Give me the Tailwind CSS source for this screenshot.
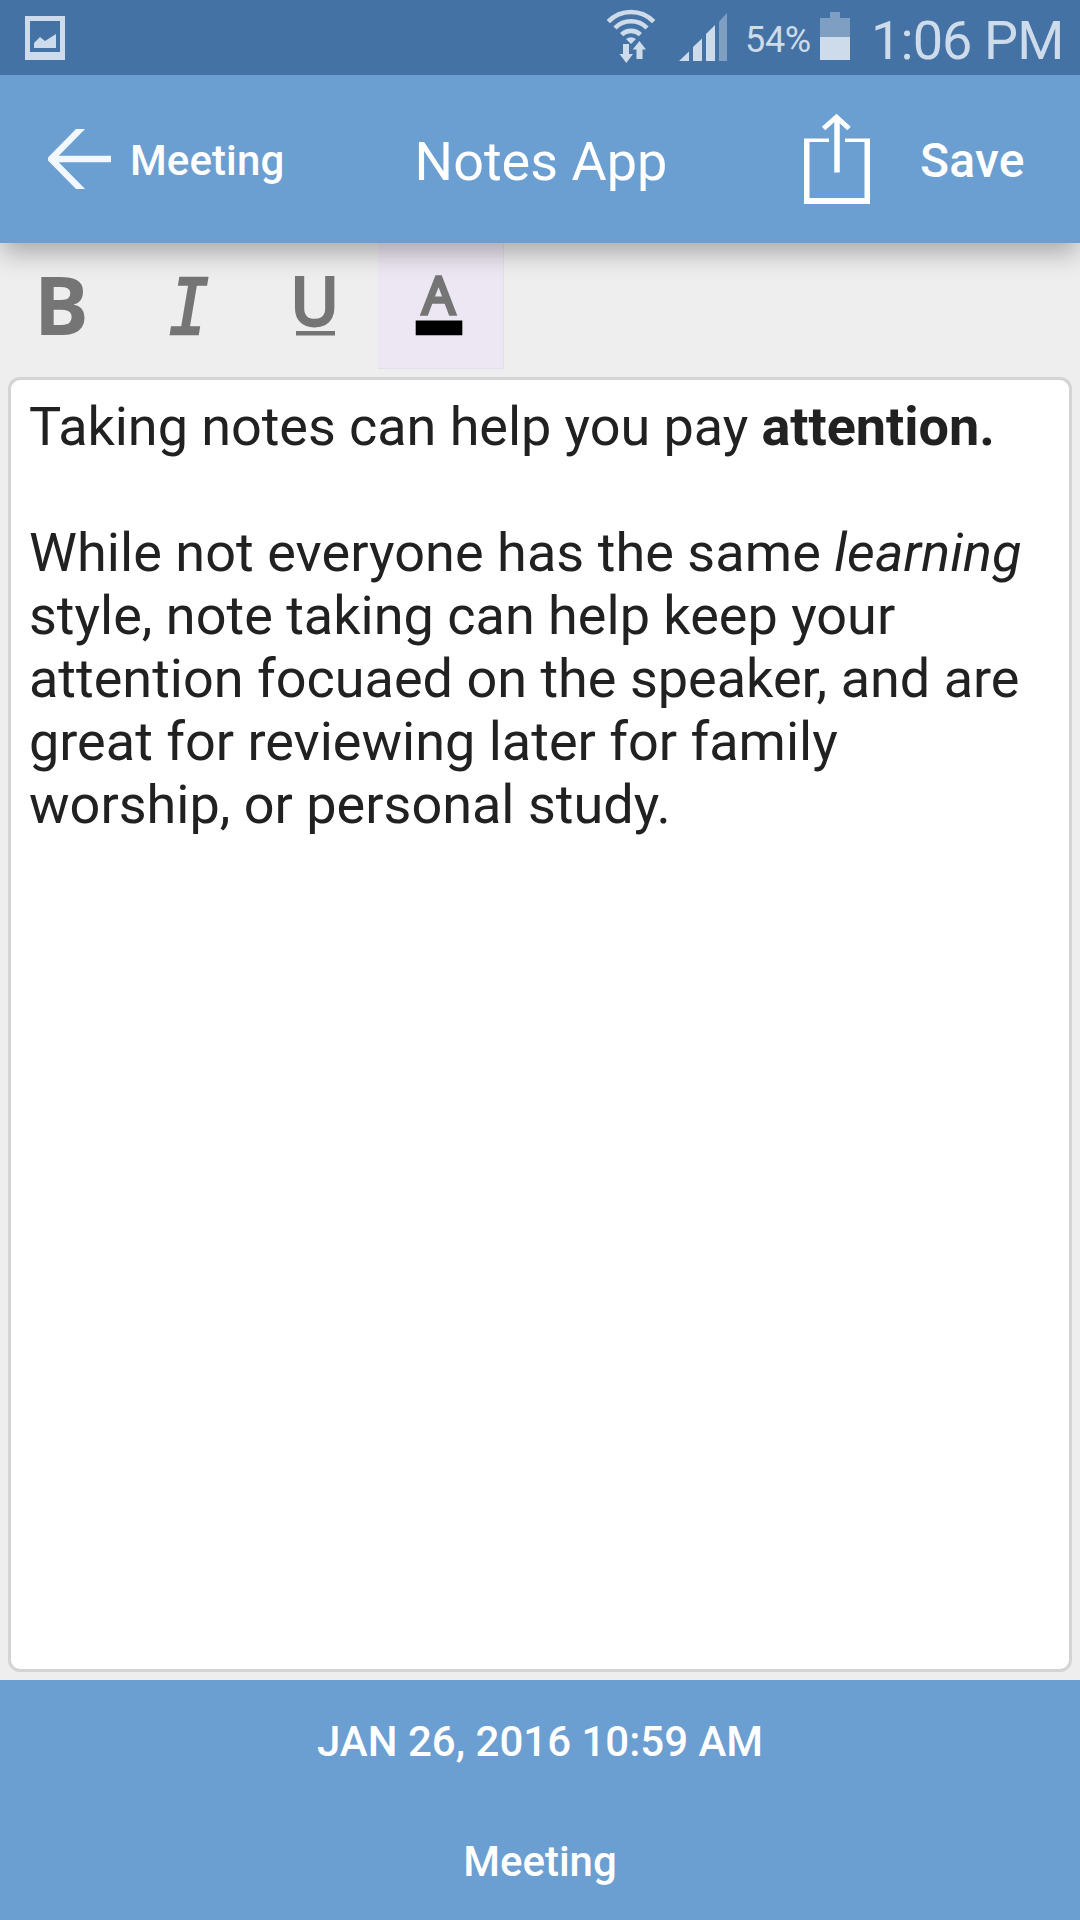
<!DOCTYPE html>
<html lang="en">
<head>
    <meta charset="UTF-8">
    <meta name="viewport" content="width=device-width, initial-scale=1.0">
    <title>Notes App</title>
    <script src="https://cdn.jsdelivr.net/npm/@tailwindcss/browser@4"></script>
</head>
<body class="bg-[#eeeeee]">
  <div class="flex flex-col w-[1080px] h-[1920px] overflow-hidden bg-[#eeeeee] font-['Roboto',sans-serif]">

    <!-- Status bar -->
    <div class="relative z-20 flex items-center shrink-0 h-[75px] bg-[#4472a4] text-[#cddbea]">
      <svg class="ml-[25px] w-[40px] h-[75px]" viewBox="25 0 40 75" fill="currentColor">
        <path fill-rule="evenodd" d="M25 16H65V60H25ZM30 21V52H60V21Z"/>
        <path d="M34 48V43L40 37L45 41L56 34V48Z"/>
      </svg>
      <svg class="ml-auto w-[50px] h-[75px]" viewBox="606 0 50 75" fill="none" stroke="currentColor" stroke-width="4.6">
        <path d="M608.3 21.6A31.5 31.5 0 0 1 653.7 21.6"/>
        <path d="M615 28A22.5 22.5 0 0 1 647 28"/>
        <path d="M621.6 34.6A13.8 13.8 0 0 1 640.4 34.6"/>
        <path d="M626 39Q631 35.4 636 39L631 44Z" fill="currentColor" stroke="none"/>
        <path d="M623 44H629V54H633L626.3 63L619.5 54H623ZM636.5 59V49.5H632.7L639.4 41L646 49.5H642.5V59Z" fill="currentColor" stroke="none"/>
      </svg>
      <svg class="ml-[23px] w-[49px] h-[75px]" viewBox="679 0 49 75" fill="currentColor">
        <path d="M679 61L689 51.5V61ZM693 61V47L702 38.5V61ZM706 61V34L715 25V61Z"/>
        <path d="M719 61V21.5L727 13V61Z" fill="#7f9fc2"/>
      </svg>
      <span class="ml-[17px] w-[67px] mt-[5px] text-[36px] leading-[48px] tracking-[-0.3px] whitespace-nowrap">54%</span>
      <svg class="ml-[8px] w-[30px] h-[75px]" viewBox="820 0 30 75" fill="currentColor">
        <path d="M820 18H830V12H840V18H850V37H820Z" fill="#7f9fc2"/>
        <path d="M820 37H850V60H820Z"/>
      </svg>
      <span class="ml-[21px] w-[209px] mt-[6px] text-[54px] leading-[60px] tracking-[-0.9px] whitespace-nowrap">1:06 PM</span>
    </div>

    <!-- App header -->
    <div class="relative z-10 grid grid-cols-3 items-center shrink-0 h-[168px] bg-[#6b9ed1] text-white shadow-[0_12px_24px_-2px_rgba(0,0,0,0.29)]">
      <div class="flex items-center">
        <svg class="ml-[48px] w-[63px] h-[60px]" viewBox="48 129 63 60" fill="none" stroke="#f2f8ff" stroke-width="6.5">
          <path d="M50 159H111M84 125.500L51 159L84 192.500"/>
        </svg>
        <span class="ml-[19px] mt-[3px] text-[42px] font-medium leading-[60px] tracking-[0.1px]">Meeting</span>
      </div>
      <span class="mt-[5px] ml-[2px] text-center text-[54px] leading-[64px]">Notes App</span>
      <div class="flex items-center">
        <svg class="ml-[84px] w-[66px] h-[168px]" viewBox="804 75 66 168" fill="none" stroke="currentColor">
          <path d="M829 138.500H804V204H870V138.500H845V142H864.500V198H809.500V142H829Z" fill="currentColor" stroke="none"/>
          <path d="M837 117V172.500" stroke-width="5.500"/>
          <path d="M823.500 128.500L836.500 117L849 128.500" stroke-width="5"/>
        </svg>
        <span class="ml-[50px] mt-[3px] text-[48px] font-medium leading-[60px] tracking-[0.2px]">Save</span>
      </div>
    </div>

    <!-- Formatting toolbar -->
    <div class="flex shrink-0 h-[126px] font-['Open_Sans',sans-serif]">
      <svg class="w-[126px] h-[126px]" viewBox="0 243 126 126" fill="#757575">
        <text x="34" y="335" font-size="81.500" font-weight="700">B</text>
      </svg>
      <svg class="w-[126px] h-[126px] font-['DejaVu_Sans_Mono',monospace]" viewBox="126 243 126 126" fill="#757575" stroke="#757575" stroke-width="2.500">
        <text transform="translate(169 334) scale(0.87 1)" font-size="76.500" font-style="italic">I</text>
      </svg>
      <svg class="w-[126px] h-[126px]" viewBox="252 243 126 126" fill="#757575">
        <text x="291" y="324.500" font-size="65" stroke="#757575" stroke-width="3.800">U</text>
        <path d="M296 331H335V335.500H296Z"/>
      </svg>
      <svg class="w-[126px] h-[126px] bg-[#ede7f3] border-r border-b border-[#e3dfe8]" viewBox="378 243 126 126" fill="#757575">
        <text x="422.500" y="314.500" font-size="52" stroke="#757575" stroke-width="3.500">A</text>
        <path d="M416 321H463V336H416Z" fill="#000"/>
      </svg>
    </div>

    <!-- Note -->
    <div class="mx-[8px] mt-[8px] h-[1295px] shrink-0 rounded-[12px] border-3 border-[#d4d4d4] bg-white pt-[15px] pl-[18px] text-[54px] leading-[63px] text-[#212121] whitespace-nowrap">
      <p class="tracking-[-0.06px]">Taking notes can help you pay <b>attention.</b></p>
      <p class="mt-[63px]"><span class="tracking-[0.06px]">While not everyone has the same <i>learning</i></span><br>style, note taking can help keep your<br>attention focuaed on the speaker, and are<br>great for reviewing later for family<br>worship, or personal study.</p>
    </div>

    <!-- Footer -->
    <div class="mt-auto h-[240px] shrink-0 bg-[#6b9ed1] pt-[2px] text-center text-[42px] font-medium leading-[120px] text-white">
      <p>JAN 26, 2016 10:59 AM</p>
      <p>Meeting</p>
    </div>
  </div>
</body>
</html>
